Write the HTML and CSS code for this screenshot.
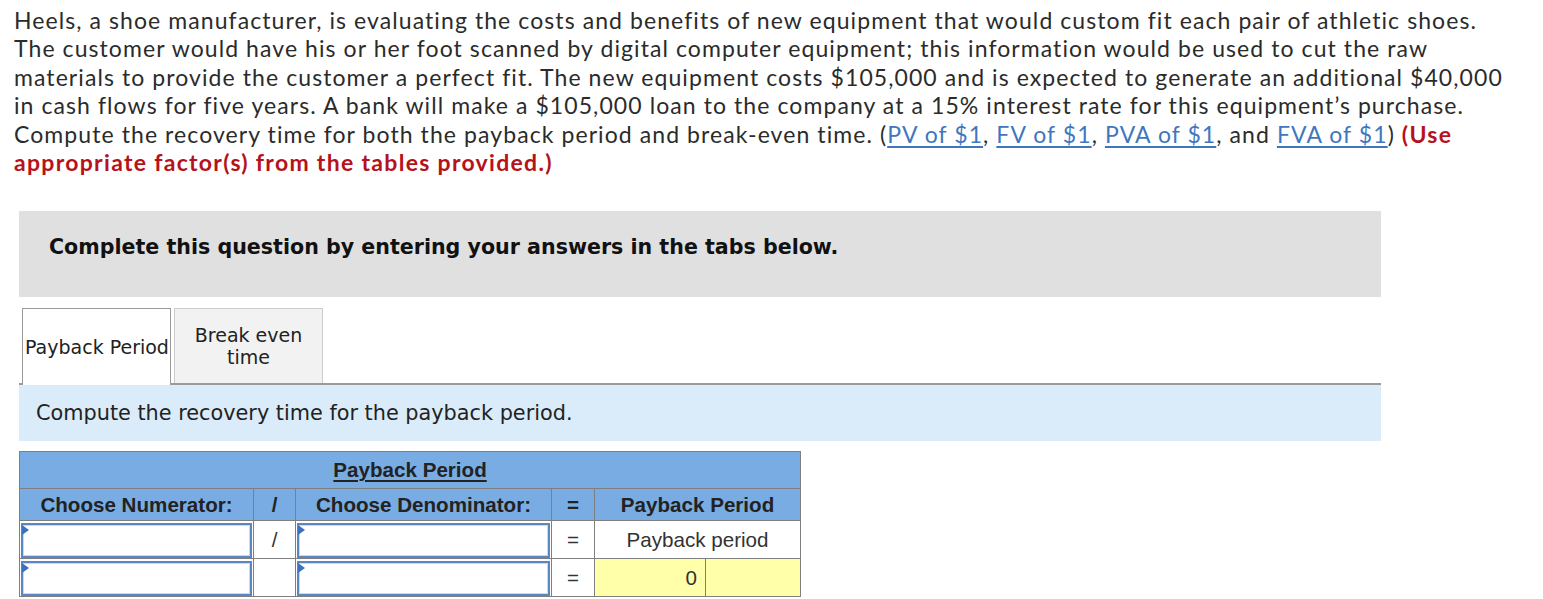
FILE: index.html
```html
<!DOCTYPE html>
<html lang="en">
<head>
<meta charset="utf-8">
<title>Payback Period</title>
<link rel="stylesheet" href="styles.css">
</head>
<body>
<p class="problem">Heels, a shoe manufacturer, is evaluating the costs and benefits of new equipment that would custom fit each pair of athletic shoes.<br>The customer would have his or her foot scanned by digital computer equipment; this information would be used to cut the raw<br>materials to provide the customer a perfect fit. The new equipment costs $105,000 and is expected to generate an additional $40,000<br>in cash flows for five years. A bank will make a $105,000 loan to the company at a 15% interest rate for this equipment’s purchase.<br>Compute the recovery time for both the payback period and break-even time. (<a href="#">PV of $1</a>, <a href="#">FV of $1</a>, <a href="#">PVA of $1</a>, and <a href="#">FVA of $1</a>) <strong class="note">(Use<br>appropriate factor(s) from the tables provided.)</strong></p>

<section class="question">
  <div class="instructions">Complete this question by entering your answers in the tabs below.</div>
  <div class="tabs">
    <div class="tab tab-active">Payback Period</div>
    <div class="tab">Break even<br>time</div>
  </div>
  <div class="prompt">Compute the recovery time for the payback period.</div>
  <table class="calc">
    <colgroup>
      <col class="c-num"><col class="c-op"><col class="c-den"><col class="c-eq"><col class="c-res1"><col class="c-res2">
    </colgroup>
    <tr class="title-row"><th colspan="6"><u>Payback Period</u></th></tr>
    <tr class="head-row">
      <th>Choose Numerator:</th><th>/</th><th>Choose Denominator:</th><th>=</th><th colspan="2">Payback Period</th>
    </tr>
    <tr class="body-row">
      <td class="in-cell"><div class="select"><span class="tri"></span></div></td>
      <td class="op">/</td>
      <td class="in-cell"><div class="select"><span class="tri"></span></div></td>
      <td class="op">=</td>
      <td colspan="2" class="label">Payback period</td>
    </tr>
    <tr class="body-row">
      <td class="in-cell"><div class="select"><span class="tri"></span></div></td>
      <td class="op"></td>
      <td class="in-cell"><div class="select"><span class="tri"></span></div></td>
      <td class="op">=</td>
      <td class="result">0</td>
      <td class="result"></td>
    </tr>
  </table>
</section>
</body>
</html>
```

FILE: styles.css
```css
html, body {
  margin: 0;
  padding: 0;
  background: #ffffff;
}

body {
  color: #2b2b2b;
}

.problem {
  margin: 0;
  padding: 6px 0 0 14px;
  font-family: "Lato", "Liberation Sans", sans-serif;
  font-size: 23px;
  letter-spacing: 1.08px;
  line-height: 28.4px;
  color: #2b2b2b;
  white-space: nowrap;
}

.problem a {
  color: #3f76c0;
  text-decoration: underline;
  text-underline-offset: 3px;
}

.problem .note {
  color: #b5121b;
  font-weight: 700;
  letter-spacing: 1.3px;
}

.question {
  margin: 35px 0 0 19px;
  width: 1362px;
}

.instructions {
  background: #e0e0e0;
  height: 86px;
  box-sizing: border-box;
  padding: 24px 0 0 30px;
  line-height: 24px;
  font-family: "DejaVu Sans", Verdana, sans-serif;
  font-weight: 700;
  font-size: 20.6px;
  color: #111;
}

.tabs {
  display: flex;
  gap: 3px;
  margin-top: 11px;
  padding-left: 3px;
  border-bottom: 2px solid #9a9a9a;
  font-family: "DejaVu Sans", Verdana, sans-serif;
  font-size: 19px;
  color: #222;
}

.tab {
  width: 147px;
  height: 74px;
  border: 1px solid #cccccc;
  border-bottom: none;
  background: #f2f2f2;
  display: flex;
  align-items: center;
  justify-content: center;
  text-align: center;
  line-height: 22px;
}

.tab-active {
  background: #ffffff;
  border-color: #9a9a9a;
  height: 76px;
  margin-bottom: -2px;
  justify-content: flex-start;
  padding-left: 2px;
  width: 145px;
}

.prompt {
  background: #daecf9;
  height: 56px;
  padding-left: 17px;
  display: flex;
  align-items: center;
  font-family: "DejaVu Sans", Verdana, sans-serif;
  font-size: 20.8px;
  color: #222;
}

.calc {
  margin-top: 10px;
  border-collapse: collapse;
  width: 781px;
  table-layout: fixed;
  font-family: "Liberation Sans", Arial, sans-serif;
  font-size: 20.6px;
  color: #222;
}

.c-num { width: 234px; }
.c-op { width: 42px; }
.c-den { width: 256px; }
.c-eq { width: 43px; }
.c-res1 { width: 111px; }
.c-res2 { width: 95px; }

.calc th,
.calc td {
  border: 1px solid #7f7f7f;
  padding: 0;
}

.calc th {
  background: #78ace3;
  font-weight: 700;
  text-align: center;
}

.title-row th {
  height: 36px;
}

.title-row u {
  text-underline-offset: 3px;
}

.head-row th {
  height: 31px;
}

.body-row td {
  height: 36px;
}

.calc .op {
  text-align: center;
  color: #333;
}

.calc .label {
  text-align: center;
  color: #333;
}

.calc .result {
  background: #ffffaa;
  text-align: right;
  padding-right: 8px;
  color: #333;
}

.calc .in-cell {
  padding: 1px 1px 0 1px;
}

.select {
  position: relative;
  height: 31px;
  border: 2px solid #5a87c4;
  box-shadow: inset 0 0 0 1px #c8daf0;
  background: #fff;
}

.tri {
  position: absolute;
  left: -1px;
  top: 0;
  width: 0;
  height: 0;
  border-top: 5px solid transparent;
  border-bottom: 5px solid transparent;
  border-left: 7px solid #3b72c0;
}
```
